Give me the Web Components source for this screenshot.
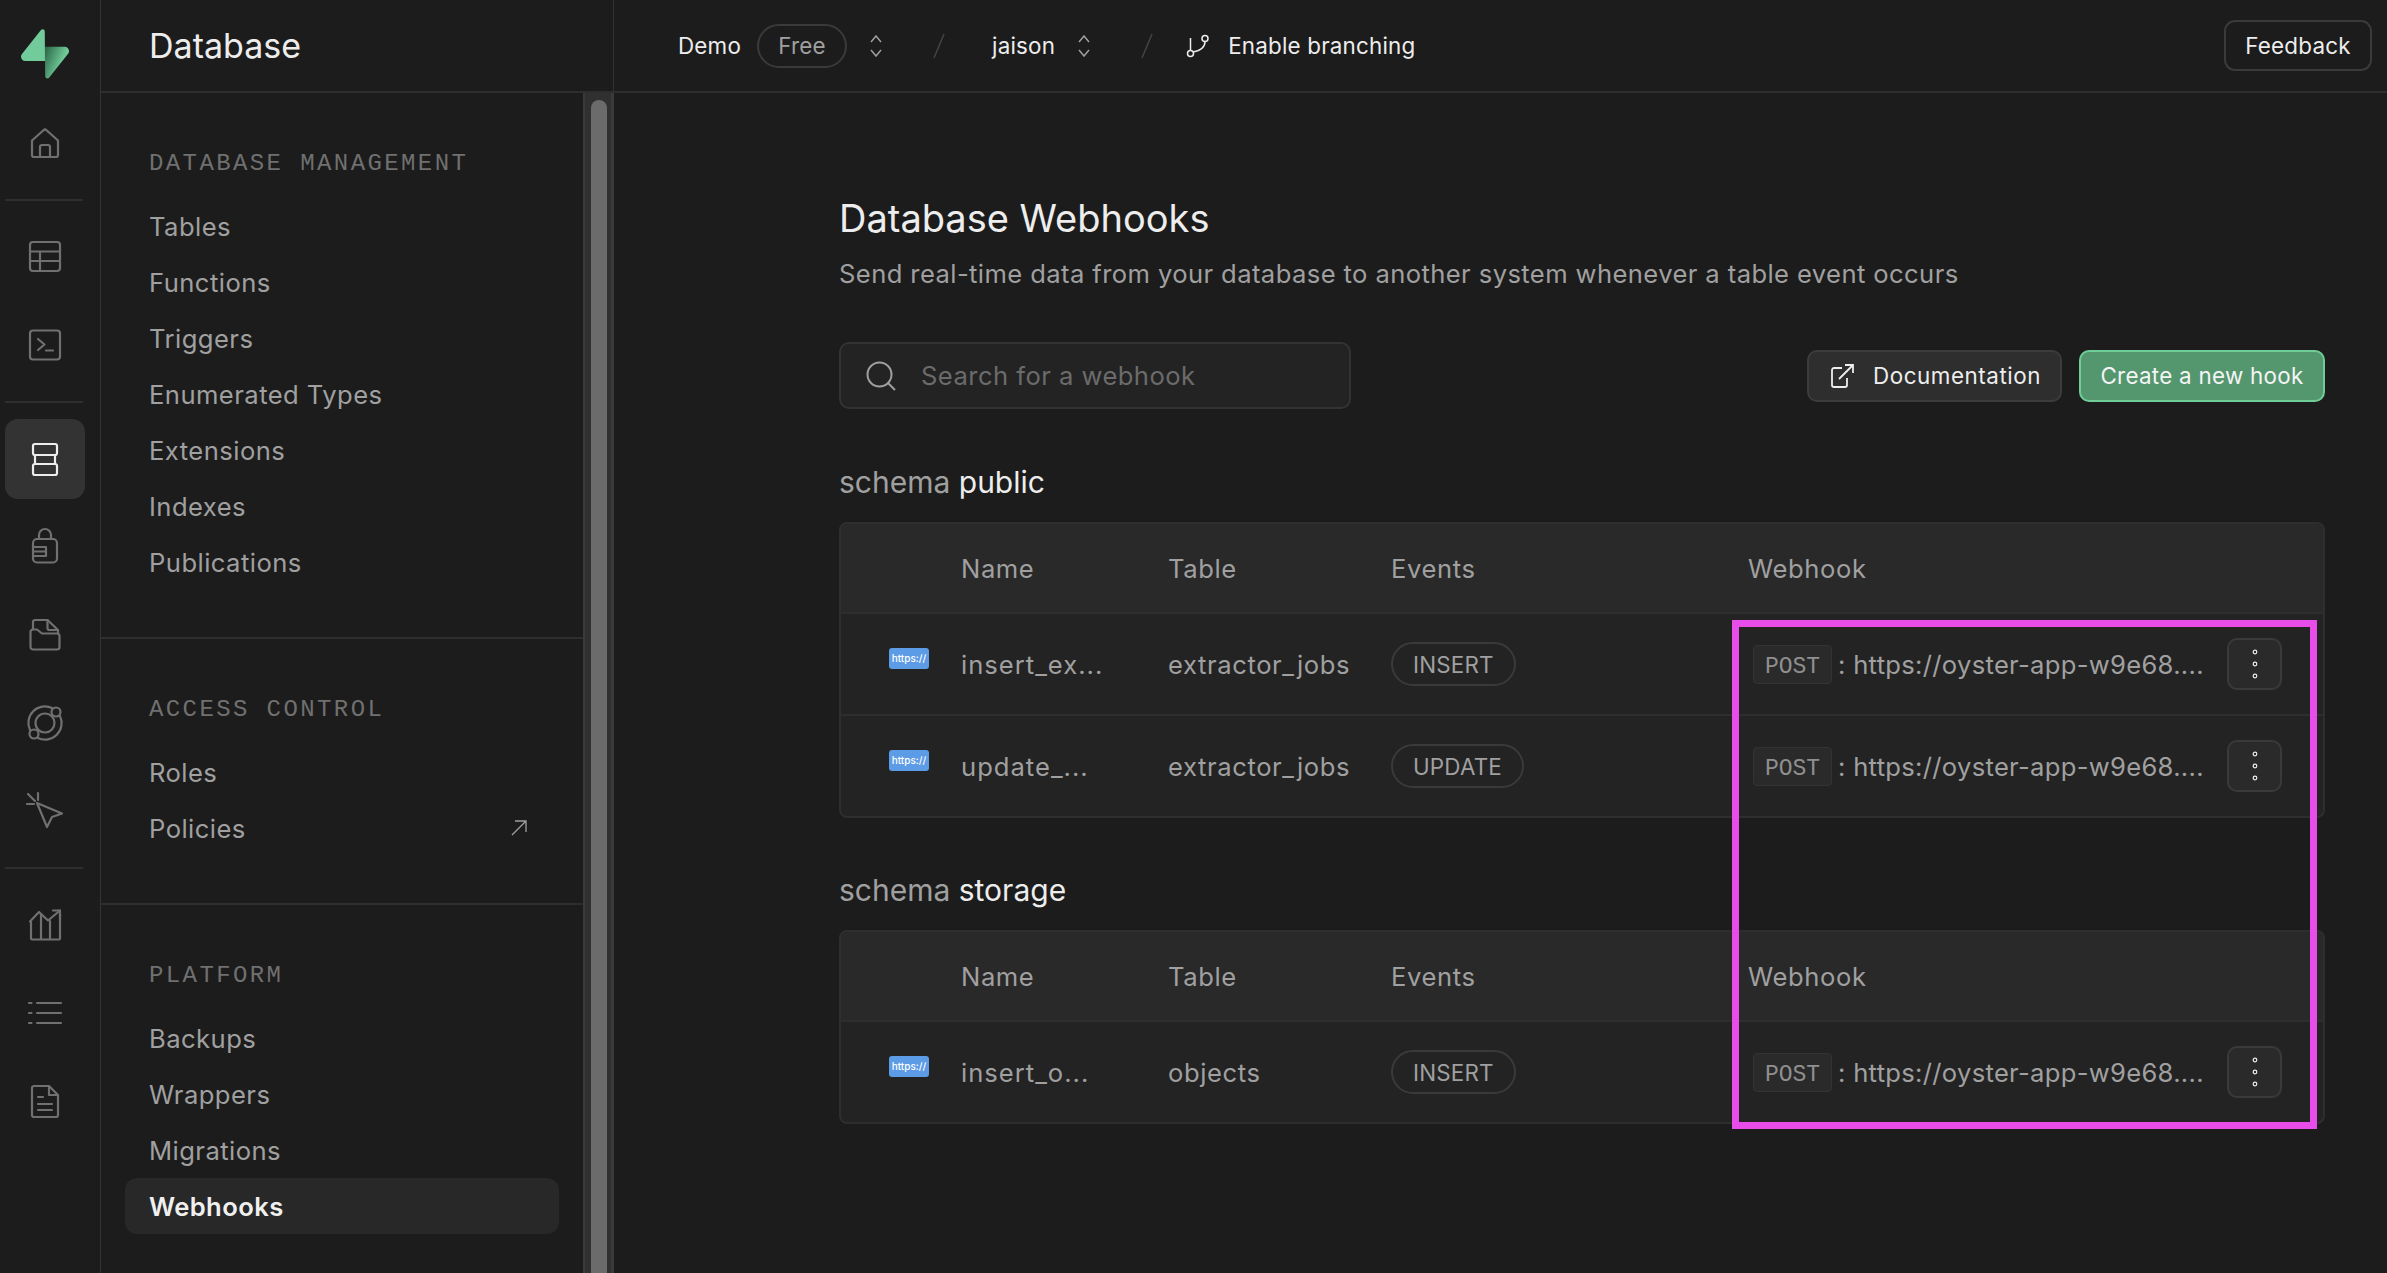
<!DOCTYPE html>
<html lang="en">
<head>
<meta charset="utf-8">
<title>Database Webhooks</title>
<style>
  html, body { margin: 0; height: 100%; background: #1c1c1c; overflow: hidden; }
  body { font-family: Inter, "Noto Sans", sans-serif; color: #ededed; }
</style>
</head>
<body>
<app-shell>
  <rail-nav slot="rail"></rail-nav>
  <top-bar slot="top"></top-bar>
  <side-nav slot="side">
    <nav-group label="DATABASE MANAGEMENT">
      <nav-item>Tables</nav-item>
      <nav-item>Functions</nav-item>
      <nav-item>Triggers</nav-item>
      <nav-item>Enumerated Types</nav-item>
      <nav-item>Extensions</nav-item>
      <nav-item>Indexes</nav-item>
      <nav-item>Publications</nav-item>
    </nav-group>
    <nav-group label="ACCESS CONTROL">
      <nav-item>Roles</nav-item>
      <nav-item external>Policies</nav-item>
    </nav-group>
    <nav-group label="PLATFORM" last>
      <nav-item>Backups</nav-item>
      <nav-item>Wrappers</nav-item>
      <nav-item>Migrations</nav-item>
      <nav-item active>Webhooks</nav-item>
    </nav-group>
  </side-nav>
  <hooks-page slot="main">
    <hook-section schema="public">
      <hook-row name="insert_ex..." table="extractor_jobs" event="INSERT"></hook-row>
      <hook-row name="update_..." table="extractor_jobs" event="UPDATE"></hook-row>
    </hook-section>
    <hook-section schema="storage">
      <hook-row name="insert_o..." table="objects" event="INSERT"></hook-row>
    </hook-section>
  </hooks-page>
</app-shell>

<script>
const RAIL_ICONS = {
  home: `<path d="M3 13.5 14.500 3.200a2.200 2.200 0 0 1 3 0L29 13.500V28a2 2 0 0 1-2 2H5a2 2 0 0 1-2-2Z"/><path d="M11 30V20a2 2 0 0 1 2-2h6a2 2 0 0 1 2 2v10"/>`,
  table: `<rect x="1" y="1" width="30" height="29" rx="3"/><path d="M1 10.500h30M1 20h30M11 10.500V30"/>`,
  terminal: `<rect x="1" y="1.500" width="30" height="29" rx="3"/><path d="m9 10 6.500 5.500L9 21M17 21.500h7"/>`,
  db: `<rect x="4" y="1" width="24" height="11" rx="2"/><rect x="4" y="21" width="24" height="11" rx="2"/><path d="M6 12v9M26 12v9"/>`,
  lock: `<path d="M10 8V4a6 6 0 0 1 12 0v4"/><rect x="4" y="8" width="24" height="23.500" rx="4"/><path d="M4 16h13M4 20.500h13M4 25h13M17 16v9"/>`,
  storage: `<path d="M4 10V3a2 2 0 0 1 2-2h12.500L29 11v3.500"/><path d="M18.500 1v8a2 2 0 0 0 2 2H29"/><path d="M1.500 13A2.500 2.500 0 0 1 4 10.500h4l5 4h15a2.500 2.500 0 0 1 2.500 2.500v11a2.500 2.500 0 0 1-2.500 2.500H4A2.500 2.500 0 0 1 1.500 28Z"/>`,
  realtime: `<circle cx="16" cy="16" r="9.500"/><path d="M23 1A16.500 16.500 0 0 0 1 23M9 31A16.500 16.500 0 0 0 31 9"/><circle cx="27" cy="5" r="4.500"/><circle cx="5" cy="27" r="4.500"/>`,
  edge: `<path d="m8 8 25 10.500-10 3.500-5 10Z"/><path d="M9 -2v7M-2 9h7M-1 -1l7 7"/>`,
  reports: `<path d="M1 12.500 10 3l9 8.500L31 1.500"/><path d="M24 1.500h7v7"/><path d="M2 13v16.500a1 1 0 0 0 1 1h27a1 1 0 0 0 1-1V5"/><path d="M12 5v25M21 12v18"/>`,
  logs: `<path d="M8 6h24M8 16h24M8 26h24"/><path d="M0 6h2.500M0 16h2.500M0 26h2.500"/>`,
  docs: `<path d="M5 1h15l9 9v20a2 2 0 0 1-2 2H5a2 2 0 0 1-2-2V3a2 2 0 0 1 2-2Z"/><path d="M20 1v9h9M9 12h5M9 19h14M9 25h14"/>`
};

class RailIcon extends HTMLElement {
  constructor() {
    super();
    this.attachShadow({ mode: "open" });
  }

  connectedCallback() {
    const name = this.getAttribute("name");
    const active = this.hasAttribute("active");
    this.shadowRoot.innerHTML = `
      <style>
        :host {
          display: flex;
          align-items: center;
          justify-content: center;
          width: 80px;
          height: 80px;
          margin: 4px 0 4px 5px;
          border-radius: 13px;
          background: ${active ? "#333333" : "transparent"};
        }
        svg { width: 32px; height: 32px; overflow: visible; fill: none; stroke: ${active ? "#ededed" : "#707070"}; stroke-width: 2.2; stroke-linecap: round; stroke-linejoin: round; }
      </style>
      <svg viewBox="0 0 32 32">${RAIL_ICONS[name]}</svg>
    `;
  }
}
customElements.define("rail-icon", RailIcon);

class RailNav extends HTMLElement {
  constructor() {
    super();
    this.attachShadow({ mode: "open" });
  }

  connectedCallback() {
    this.shadowRoot.innerHTML = `
      <style>
        :host { display: flex; flex-direction: column; height: 100%; box-sizing: border-box; border-right: 1px solid #333333; }
        .logo { height: 99px; box-sizing: border-box; padding: 29px 0 0 21px; }
        .logo svg { display: block; width: 48px; height: 50px; }
        hr { flex: none; border: 0; height: 2px; margin: 12px 0 12px 5px; width: 78px; background: #2e2e2e; }
      </style>
      <div class="logo">
        <svg viewBox="0 0 109 113">
          <defs>
            <linearGradient id="bolt" x1="53" y1="55" x2="95" y2="72" gradientUnits="userSpaceOnUse">
              <stop offset="0" stop-color="#2f6b4c"/><stop offset="1" stop-color="#70cb98"/>
            </linearGradient>
          </defs>
          <path fill="url(#bolt)" d="M63.7 110.3c-2.9 3.6-8.7 1.6-8.7-3L54 40.100h45.200c8.200 0 12.800 9.400 7.700 15.800Z"/>
          <path fill="#72cb9a" d="M45.300 2.100c2.900-3.600 8.700-1.600 8.700 3l.5 67.200H9.800c-8.200 0-12.700-9.500-7.600-15.900Z"/>
        </svg>
      </div>
      <rail-icon name="home"></rail-icon>
      <hr>
      <rail-icon name="table"></rail-icon>
      <rail-icon name="terminal"></rail-icon>
      <hr>
      <rail-icon name="db" active></rail-icon>
      <rail-icon name="lock"></rail-icon>
      <rail-icon name="storage"></rail-icon>
      <rail-icon name="realtime"></rail-icon>
      <rail-icon name="edge"></rail-icon>
      <hr>
      <rail-icon name="reports"></rail-icon>
      <rail-icon name="logs"></rail-icon>
      <rail-icon name="docs"></rail-icon>
    `;
  }
}
customElements.define("rail-nav", RailNav);

class TopBar extends HTMLElement {
  constructor() {
    super();
    this.attachShadow({ mode: "open" });
  }

  connectedCallback() {
    const chevrons = `<svg class="chev" viewBox="0 0 12 22"><path d="M1 7l5-6 5 6M1 15l5 6 5-6"/></svg>`;
    const slash = `<svg class="slash" viewBox="0 0 12 24"><path d="M1 24 11 0"/></svg>`;
    this.shadowRoot.innerHTML = `
      <style>
        :host { display: flex; align-items: center; height: 93px; box-sizing: border-box; border-bottom: 2px solid #2e2e2e; font-size: 22.400px; letter-spacing: .2px; color: #ededed; }
        .title { flex: 0 0 513px; height: 100%; box-sizing: border-box; padding-left: 48px; border-right: 1px solid #333333; display: flex; align-items: center; font-size: 34px; letter-spacing: 0; }
        .crumbs { flex: 1; display: flex; align-items: center; padding-left: 64px; }
        .pill { margin-left: 16px; width: 90px; height: 44px; box-sizing: border-box; border: 2px solid #3a3a3a; border-radius: 22px; display: flex; align-items: center; justify-content: center; color: #a0a0a0; }
        svg { fill: none; stroke: #a0a0a0; stroke-width: 1.500; flex: none; }
        .chev { width: 12px; height: 22px; margin: 0 0 0 23px; }
        .slash { width: 12px; height: 24px; margin: 0 47px 0 51px; stroke: #444444; }
        .branch { width: 24px; height: 24px; margin-right: 18px; stroke: #ededed; margin-left: -14px; }
        .feedback { margin-right: 15px; width: 148px; height: 51px; box-sizing: border-box; border: 2px solid #3a3a3a; border-radius: 11px; display: flex; align-items: center; justify-content: center; }
      </style>
      <div class="title">Database</div>
      <div class="crumbs">
        <span>Demo</span><span class="pill">Free</span>${chevrons}${slash}
        <span>jaison</span>${chevrons}${slash}
        <svg class="branch" viewBox="0 0 24 24"><circle cx="4.500" cy="19.500" r="3"/><circle cx="19" cy="4.500" r="3"/><path d="M4.500 16.500V4M19 7.500c0 6-4 9-12 10.500"/></svg>
        <span>Enable branching</span>
      </div>
      <div class="feedback">Feedback</div>
    `;
  }
}
customElements.define("top-bar", TopBar);

class SideNav extends HTMLElement {
  constructor() {
    super();
    this.attachShadow({ mode: "open" });
  }

  connectedCallback() {
    this.shadowRoot.innerHTML = `
      <style>
        :host { display: flex; height: 100%; overflow: hidden; }
        .list { flex: 1; min-width: 0; }
        .track { flex: 0 0 31px; border-left: 2px solid #3a3a3a; border-right: 3px solid #3a3a3a; background: #303030; box-sizing: border-box; padding: 7px 4px 0 6px; }
        .thumb { height: 1300px; background: #6b6b6b; border-radius: 8px 8px 0 0; }
      </style>
      <div class="list"><slot></slot></div>
      <div class="track"><div class="thumb"></div></div>
    `;
  }
}
customElements.define("side-nav", SideNav);

class NavGroup extends HTMLElement {
  constructor() {
    super();
    this.attachShadow({ mode: "open" });
  }

  connectedCallback() {
    const last = this.hasAttribute("last");
    this.shadowRoot.innerHTML = `
      <style>
        :host { display: block; padding: 52px 24px 47px; border-bottom: ${last ? "0" : "2px solid #2e2e2e"}; }
        .label { height: 36px; margin: 0 0 17px 24px; font: 400 24px/38px "Liberation Mono", monospace; letter-spacing: 2.400px; color: #707070; }
      </style>
      <div class="label">${this.getAttribute("label")}</div>
      <slot></slot>
    `;
  }
}
customElements.define("nav-group", NavGroup);

class NavItem extends HTMLElement {
  constructor() {
    super();
    this.attachShadow({ mode: "open" });
  }

  connectedCallback() {
    const active = this.hasAttribute("active");
    const arrow = this.hasAttribute("external")
      ? `<svg viewBox="0 0 16 16"><path d="M1 15 15 1M4 1h11v11"/></svg>`
      : "";
    this.shadowRoot.innerHTML = `
      <style>
        :host { display: flex; align-items: center; justify-content: space-between; height: 56px; box-sizing: border-box; padding: 0 32px 0 24px; border-radius: 12px; font-size: 25.600px; letter-spacing: ${active ? ".4px" : ".45px"}; color: ${active ? "#f0f0f0" : "#a0a0a0"}; font-weight: ${active ? 600 : 400}; background: ${active ? "#282828" : "transparent"}; }
        svg { width: 16px; height: 16px; fill: none; stroke: #a0a0a0; stroke-width: 1.300; }
      </style>
      <slot></slot>${arrow}
    `;
  }
}
customElements.define("nav-item", NavItem);

class HooksPage extends HTMLElement {
  constructor() {
    super();
    this.attachShadow({ mode: "open" });
  }

  connectedCallback() {
    this.shadowRoot.innerHTML = `
      <style>
        :host { display: block; position: relative; height: 100%; box-sizing: border-box; padding: 103px 62px 0 225px; }
        h1 { margin: 0; font-size: 38px; line-height: 44px; font-weight: 400; color: #ededed; }
        p { margin: 16px 0 50px; font-size: 25.600px; letter-spacing: .4px; line-height: 36px; color: #a0a0a0; }
        .tools { display: flex; align-items: center; gap: 17px; margin-bottom: 52px; }
        .search { width: 512px; height: 67px; margin-right: auto; box-sizing: border-box; border: 2px solid #333333; border-radius: 10px; background: #232323; display: flex; align-items: center; padding-left: 25px; gap: 25px; font-size: 25.600px; letter-spacing: .45px; color: #6b6b6b; }
        .search svg { width: 30px; height: 30px; fill: none; stroke: #a0a0a0; stroke-width: 2; }
        .btn { height: 52px; box-sizing: border-box; border-radius: 10px; border: 2px solid #3c3c3c; background: #2e2e2e; display: flex; align-items: center; justify-content: center; font-size: 22.400px; color: #ededed; }
        .docs { width: 255px; gap: 18px; justify-content: flex-start; padding-left: 22px; letter-spacing: .55px; }
        .docs svg { width: 24px; height: 24px; fill: none; stroke: #ededed; stroke-width: 1.800; }
        .create { width: 246px; background: #54976e; border-color: #6fce98; color: #f4f4f4; letter-spacing: .27px; }
        .mark { position: absolute; left: 1118px; top: 527px; width: 585px; height: 509px; box-sizing: border-box; border: 7px solid #e94de9; }
      </style>
      <h1>Database Webhooks</h1>
      <p>Send real-time data from your database to another system whenever a table event occurs</p>
      <div class="tools">
        <div class="search">
          <svg viewBox="0 0 30 30"><circle cx="13.500" cy="13.500" r="12"/><path d="m22 22 7 7"/></svg>
          <span>Search for a webhook</span>
        </div>
        <div class="btn docs">
          <svg viewBox="0 0 24 24"><path d="M11 4H3a2 2 0 0 0-2 2v15a2 2 0 0 0 2 2h11a2 2 0 0 0 2-2v-7"/><path d="M8 15 22 1M14 1h8v8"/></svg>
          <span>Documentation</span>
        </div>
        <div class="btn create">Create a new hook</div>
      </div>
      <slot></slot>
      <div class="mark"></div>
    `;
  }
}
customElements.define("hooks-page", HooksPage);

class HookSection extends HTMLElement {
  constructor() {
    super();
    this.attachShadow({ mode: "open" });
  }

  connectedCallback() {
    this.shadowRoot.innerHTML = `
      <style>
        :host { display: block; margin-bottom: 51px; }
        .title { height: 40px; line-height: 42px; margin-bottom: 21px; font-size: 30px; color: #a0a0a0; }
        .title b { font-weight: 400; color: #ededed; }
        .table { border: 2px solid #2e2e2e; border-radius: 8px; background: #232323; overflow: hidden; }
        .head { display: grid; grid-template-columns: 120px 207px 223px 357px 1fr; align-items: center; height: 90px; box-sizing: border-box; background: #292929; font-size: 25.600px; letter-spacing: .6px; color: #a0a0a0; border-bottom: 2px solid #2e2e2e; }
        ::slotted(hook-row:not(:last-child)) { border-bottom: 2px solid #2e2e2e; }
      </style>
      <div class="title">schema <b>${this.getAttribute("schema")}</b></div>
      <div class="table">
        <div class="head">
          <span></span>
          <span>Name</span>
          <span>Table</span>
          <span>Events</span>
          <span>Webhook</span>
        </div>
        <slot></slot>
      </div>
    `;
  }
}
customElements.define("hook-section", HookSection);

class HookRow extends HTMLElement {
  constructor() {
    super();
    this.attachShadow({ mode: "open" });
  }

  connectedCallback() {
    this.shadowRoot.innerHTML = `
      <style>
        :host { display: grid; grid-template-columns: 120px 207px 223px 357px 1fr; align-items: center; height: 100px; font-size: 25.600px; letter-spacing: .6px; color: #a0a0a0; }
        .http { margin: 0 0 11px 48px; width: 40px; height: 21px; background: #5c9be6; border-radius: 3px; color: #ffffff; font-size: 10px; font-weight: 500; letter-spacing: 0; line-height: 21px; text-align: center; }
        .name { letter-spacing: 1px; }
        .pill { display: inline-flex; align-items: center; height: 44px; box-sizing: border-box; padding: 0 20px; border: 2px solid #3a3a3a; border-radius: 22px; font-size: 22.400px; letter-spacing: .2px; }
        .hook { display: flex; align-items: center; padding-right: 41px; }
        .method { margin-left: 5px; width: 79px; height: 39px; box-sizing: border-box; border: 1px solid #333333; border-radius: 4px; background: #2a2a2a; color: #8f8f8f; font: 400 23px/42px "Liberation Mono", monospace; letter-spacing: 0; text-align: center; }
        .url { margin-left: 6px; white-space: nowrap; font-size: 25.600px; letter-spacing: .3px; flex: 1; }
        .more { flex: none; width: 55px; height: 52px; box-sizing: border-box; border: 2px solid #3a3a3a; border-radius: 10px; background: #2a2a2a; display: flex; align-items: center; justify-content: center; }
        .more svg { width: 6px; height: 30px; fill: none; stroke: #ededed; stroke-width: 1.200; }
      </style>
      <div class="http">https://</div>
      <div class="name">${this.getAttribute("name")}</div>
      <div>${this.getAttribute("table")}</div>
      <div><span class="pill">${this.getAttribute("event")}</span></div>
      <div class="hook">
        <span class="method">POST</span>
        <span class="url">: https://oyster-app-w9e68....</span>
        <span class="more"><svg viewBox="0 0 6 30"><circle cx="3" cy="3" r="1.800"/><circle cx="3" cy="15" r="1.800"/><circle cx="3" cy="27" r="1.800"/></svg></span>
      </div>
    `;
  }
}
customElements.define("hook-row", HookRow);

class AppShell extends HTMLElement {
  constructor() {
    super();
    this.attachShadow({ mode: "open" });
  }

  connectedCallback() {
    this.shadowRoot.innerHTML = `
      <style>
        :host { display: grid; grid-template-columns: 101px 1fr; grid-template-rows: 93px 1fr; width: 2387px; height: 1273px; overflow: hidden; }
        .rail { grid-row: 1 / 3; min-height: 0; }
        .body { display: grid; grid-template-columns: 513px 1fr; min-height: 0; }
      </style>
      <div class="rail"><slot name="rail"></slot></div>
      <slot name="top"></slot>
      <div class="body"><slot name="side"></slot><slot name="main"></slot></div>
    `;
  }
}
customElements.define("app-shell", AppShell);
</script>
</body>
</html>
